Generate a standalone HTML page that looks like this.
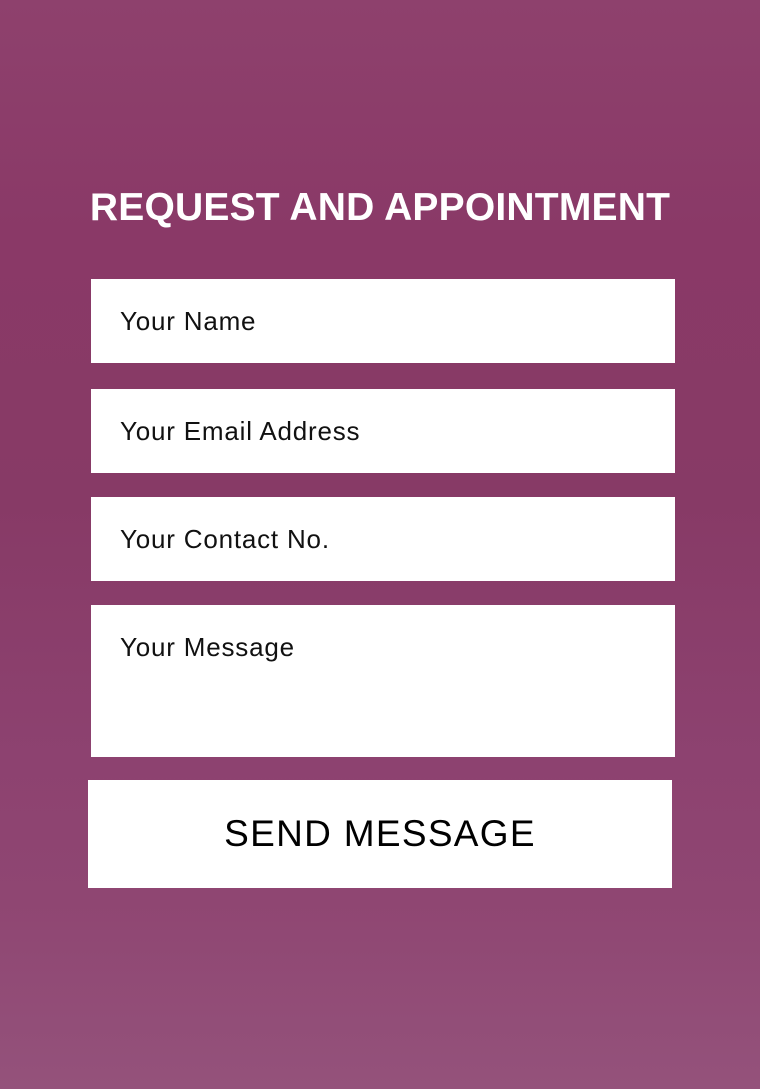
<!DOCTYPE html>
<html><head><style>
html,body{margin:0;padding:0}
body{width:760px;height:1089px;background:#8a3a68;position:relative;overflow:hidden;font-family:"Liberation Sans",sans-serif}
.bg{position:absolute;inset:0;background:
linear-gradient(180deg,#8e416d 0,#8a3967 230px,#873a66 500px,#8d4270 760px,#8f4672 900px,#94527b 1089px)}
h1{position:absolute;top:186px;left:0;width:760px;text-align:center;margin:0;color:#fff;font-size:39px;font-weight:bold;letter-spacing:0.2px}
.f{position:absolute;left:91px;width:584px;background:#fff;color:#111;font-size:26px;box-sizing:border-box;padding-left:29px;letter-spacing:0.8px}
.btn{position:absolute;left:88px;top:780px;width:584px;height:108px;background:#fff;color:#000;font-size:37px;text-align:center;line-height:108px;letter-spacing:1.3px}
</style></head><body>
<div class="bg"></div>
<h1>REQUEST AND APPOINTMENT</h1>
<div class="f" style="top:279px;height:84px;line-height:84px">Your Name</div>
<div class="f" style="top:389px;height:84px;line-height:84px">Your Email Address</div>
<div class="f" style="top:497px;height:84px;line-height:84px">Your Contact No.</div>
<div class="f" style="top:605px;height:152px;padding-top:27px">Your Message</div>
<div class="btn">SEND MESSAGE</div>
</body></html>
